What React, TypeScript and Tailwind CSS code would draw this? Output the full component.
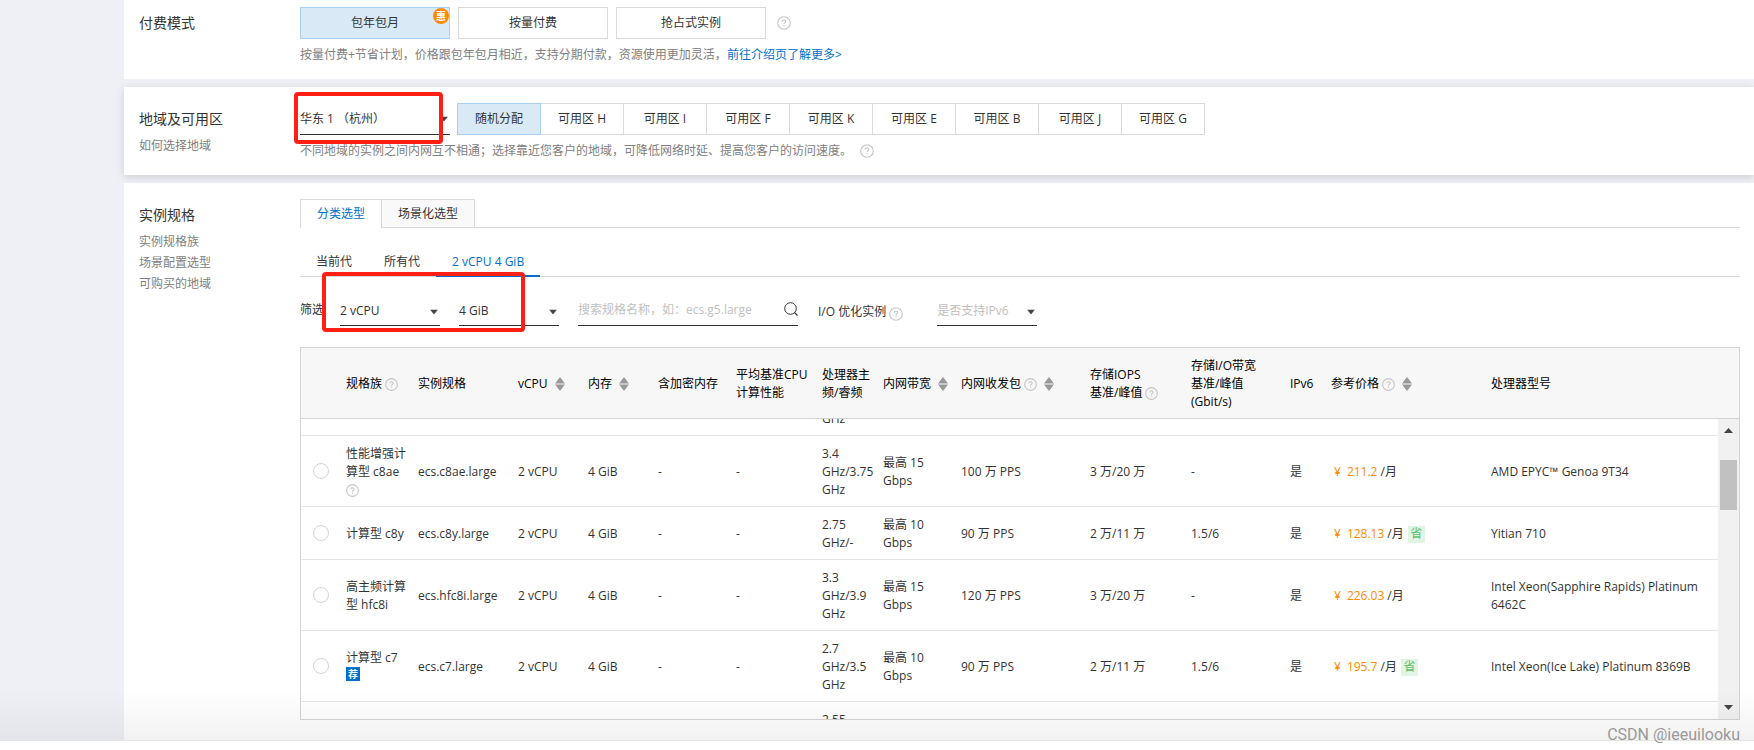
import { clsx } from "clsx"
import { useLayoutEffect, useRef, useState } from "react"
import type { ReactNode } from "react"

type Spec = {
    id: string
    family?: string
    help?: boolean
    recommended?: boolean
    name?: string
    clock: string[]
    bandwidth?: string
    pps?: string
    iops?: string
    io?: string
    price?: string
    saving?: boolean
    cpu?: string
}

// the first and last entries only peek into the scroll area
const SPECS: Spec[] = [
    { id: "prev", clock: ["", "", "GHz"] },
    { id: "c8ae", family: "性能增强计算型 c8ae", help: true, name: "ecs.c8ae.large", clock: ["3.4", "GHz/3.75", "GHz"], bandwidth: "最高 15", pps: "100 万 PPS", iops: "3 万/20 万", io: "-", price: "211.2", cpu: "AMD EPYC™ Genoa 9T34" },
    { id: "c8y", family: "计算型 c8y", name: "ecs.c8y.large", clock: ["2.75", "GHz/-"], bandwidth: "最高 10", pps: "90 万 PPS", iops: "2 万/11 万", io: "1.5/6", price: "128.13", saving: true, cpu: "Yitian 710" },
    { id: "hfc8i", family: "高主频计算型 hfc8i", name: "ecs.hfc8i.large", clock: ["3.3", "GHz/3.9", "GHz"], bandwidth: "最高 15", pps: "120 万 PPS", iops: "3 万/20 万", io: "-", price: "226.03", cpu: "Intel Xeon(Sapphire Rapids) Platinum 6462C" },
    { id: "c7", family: "计算型 c7", recommended: true, name: "ecs.c7.large", clock: ["2.7", "GHz/3.5", "GHz"], bandwidth: "最高 10", pps: "90 万 PPS", iops: "2 万/11 万", io: "1.5/6", price: "195.7", saving: true, cpu: "Intel Xeon(Ice Lake) Platinum 8369B" },
    { id: "next", clock: ["2.55", "", ""] },
]

const ZONES = ["随机分配", "可用区 H", "可用区 I", "可用区 F", "可用区 K", "可用区 E", "可用区 B", "可用区 J", "可用区 G"]

const HelpIcon = ({ className }: { className?: string }) => (
    <svg viewBox="0 0 16 16" className={clsx("shrink-0 text-[#c4c4c4]", className)} fill="none" stroke="currentColor">
        <circle cx="8" cy="8" r="7.2" strokeWidth="1.3" />
        <path d="M6 6.6c0-1.3.9-2 2-2s2 .7 2 1.8c0 1.5-2 1.5-2 3.1" strokeWidth="1.3" />
        <path d="M8 10.7v1.2" strokeWidth="1.4" />
    </svg>
)

const SortIcon = () => (
    <svg viewBox="0 0 10 14" className="ml-[7px] h-[14px] w-[10px] shrink-0 fill-[#999]">
        <path d="M5 0l5 6.400H0zM0 7.600h10L5 14z" />
    </svg>
)

const Panel = ({ title, links, className, children }: { title: string; links?: string[]; className?: string; children: ReactNode }) => (
    <section className={clsx("flex bg-white pr-[14px] pl-[15px]", className)}>
        <div className="w-[161px] shrink-0 pt-[6px]">
            <h2 className="text-[14px] leading-5 text-[#333]">{title}</h2>
            {links && (
                <ul className="mt-[6px]">
                    {links.map((link) => (
                        <li key={link} className="leading-[21px]">
                            <a href="#" className="text-[#808080]">{link}</a>
                        </li>
                    ))}
                </ul>
            )}
        </div>
        <div className="min-w-0 flex-1">{children}</div>
    </section>
)

const Dropdown = ({ label, options, className, placeholder }: { label: string; options: string[]; className?: string; placeholder?: boolean }) => (
    <div className={clsx("relative border-b border-[#333]", className)}>
        <select aria-label={label} className={clsx("h-full w-full appearance-none bg-transparent outline-0", placeholder ? "text-[#bfbfbf]" : "text-[#333]")}>
            {options.map((option) => (
                <option key={option}>{option}</option>
            ))}
        </select>
        <svg viewBox="0 0 8 5" className="pointer-events-none absolute top-1/2 right-[2px] h-[5px] w-2 -translate-y-1/2 fill-[#444]">
            <path d="M0 0h8L4 5z" />
        </svg>
    </div>
)

const Columns = () => (
    <colgroup>
        <col className="w-[37px]" />
        <col className="w-[72px]" />
        <col className="w-[100px]" />
        <col className="w-[70px]" />
        <col className="w-[70px]" />
        <col className="w-[78px]" />
        <col className="w-[86px]" />
        <col className="w-[61px]" />
        <col className="w-[78px]" />
        <col className="w-[129px]" />
        <col className="w-[101px]" />
        <col className="w-[99px]" />
        <col className="w-[41px]" />
        <col className="w-[160px]" />
        <col />
    </colgroup>
)

const Th = ({ children, help, sort }: { children?: ReactNode; help?: boolean; sort?: boolean }) => (
    <th className="pt-[2px] pl-2 text-left font-normal whitespace-nowrap">
        <div className="flex items-center">
            <span>{children}</span>
            {help && <HelpIcon className="ml-[3px] size-[13px]" />}
            {sort && <SortIcon />}
        </div>
    </th>
)

const Td = ({ children, className }: { children?: ReactNode; className?: string }) => (
    <td className={clsx("pt-[9px] pb-[7px] pl-2", className)}>{children}</td>
)

const SpecRow = ({ spec, selected, onSelect }: { spec: Spec; selected: boolean; onSelect: () => void }) => (
    <tr className="border-b border-[#e5e5e5]">
        <td className="pl-3">
            {spec.name && (
                <input
                    type="radio"
                    name="spec"
                    aria-label={spec.name}
                    checked={selected}
                    onChange={onSelect}
                    className="block size-4 appearance-none rounded-full border border-[#d4d4d4] bg-white checked:border-4 checked:border-[#0070cc]"
                />
            )}
        </td>
        <Td>
            <div className="w-[62px]">
                {spec.family}
                {spec.help && (
                    <div className="flex h-[18px] items-center">
                        <HelpIcon className="size-[13px]" />
                    </div>
                )}
                {spec.recommended && (
                    <div className="flex h-[18px] items-start">
                        <span className="flex size-[14px] items-center justify-center bg-[#0070cc] text-[10px] leading-none font-bold text-white">荐</span>
                    </div>
                )}
            </div>
        </Td>
        <Td>{spec.name}</Td>
        <Td>{spec.name && "2 vCPU"}</Td>
        <Td>{spec.name && "4 GiB"}</Td>
        <Td>{spec.name && "-"}</Td>
        <Td>{spec.name && "-"}</Td>
        <Td className="whitespace-nowrap">
            {spec.clock.map((line, i) => (
                <div key={i} className="min-h-[18px]">{line}</div>
            ))}
        </Td>
        <Td className="whitespace-nowrap">
            {spec.bandwidth && <>{spec.bandwidth}<br />Gbps</>}
        </Td>
        <Td>{spec.pps}</Td>
        <Td>{spec.iops}</Td>
        <Td>{spec.io}</Td>
        <Td>{spec.name && "是"}</Td>
        <Td>
            {spec.price && (
                <div className="flex items-center">
                    <span className="pl-[3px] text-[#ff8a00]">¥</span>
                    <span className="ml-[6px] text-[#ff8a00]">{spec.price}</span>
                    <span className="ml-[3px]">/月</span>
                    {spec.saving && <span className="-my-px ml-1 flex size-[17px] items-center justify-center bg-[#e0f5e3] text-[#5fbf71]">省</span>}
                </div>
            )}
        </Td>
        <Td className="pr-4">{spec.cpu}</Td>
    </tr>
)

const SpecTable = () => {
    const [selected, setSelected] = useState("")
    const body = useRef<HTMLDivElement>(null)

    useLayoutEffect(() => {
        if (body.current) body.current.scrollTop = 54
    }, [])

    const scrollBy = (delta: number) => body.current?.scrollBy({ top: delta })

    return (
        <div className="border border-[#d4d4d4]">
            <div className="border-b border-[#d4d4d4] bg-[#f7f7f7] pr-[21px]">
                <table className="w-full table-fixed text-black">
                    <Columns />
                    <thead>
                        <tr className="h-[70px]">
                            <Th />
                            <Th help>规格族</Th>
                            <Th>实例规格</Th>
                            <Th sort>vCPU</Th>
                            <Th sort>内存</Th>
                            <Th>含加密内存</Th>
                            <Th>平均基准CPU<br />计算性能</Th>
                            <Th>处理器主<br />频/睿频</Th>
                            <Th sort>内网带宽</Th>
                            <Th help sort>内网收发包</Th>
                            <Th>存储IOPS<br /><span className="flex items-center">基准/峰值<HelpIcon className="ml-[3px] size-[13px]" /></span></Th>
                            <Th>存储I/O带宽<br />基准/峰值<br />(Gbit/s)</Th>
                            <Th>IPv6</Th>
                            <Th help sort>参考价格</Th>
                            <Th>处理器型号</Th>
                        </tr>
                    </thead>
                </table>
            </div>
            <div className="flex h-[300px]">
                <div ref={body} className="flex-1 overflow-y-scroll [scrollbar-width:none]">
                    <table className="w-full table-fixed border-collapse text-[#333]">
                        <Columns />
                        <tbody>
                            {SPECS.map((spec) => (
                                <SpecRow key={spec.id} spec={spec} selected={selected === spec.id} onSelect={() => setSelected(spec.id)} />
                            ))}
                        </tbody>
                    </table>
                </div>
                <div className="flex w-[21px] flex-col items-center bg-[#f1f1f1]">
                    <button type="button" aria-label="向上滚动" onClick={() => scrollBy(-40)} className="flex h-[23px] w-full items-center justify-center">
                        <svg viewBox="0 0 9 5" className="h-[5px] w-[9px] fill-[#444]"><path d="M0 5h9L4.500 0z" /></svg>
                    </button>
                    <div className="w-full flex-1 px-[2px] pt-[18px]">
                        <div className="h-[50px] bg-[#c1c1c1]" />
                    </div>
                    <button type="button" aria-label="向下滚动" onClick={() => scrollBy(40)} className="flex h-[23px] w-full items-center justify-center">
                        <svg viewBox="0 0 9 5" className="h-[5px] w-[9px] fill-[#444]"><path d="M0 0h9L4.500 5z" /></svg>
                    </button>
                </div>
            </div>
        </div>
    )
}

const App = () => {
    const [zone, setZone] = useState(ZONES[0])

    return (
        <div className="relative overflow-hidden bg-white font-['Open_Sans','Noto_Sans_CJK_SC',sans-serif] text-[12px] leading-[18px] text-[#333]">
            <div className="relative border-b border-[#e5e5e5] bg-[#eff0f5] pl-[124px]">
                <Panel title="付费模式" className="pt-[7px] pb-[15px]">
                    <div className="flex items-center gap-2">
                        <button type="button" className="relative h-8 w-[150px] border border-[#a9d0f0] bg-[#d9eaf6]">
                            包年包月
                            <span className="absolute top-0 right-0 flex size-4 items-center justify-center rounded-full bg-[#ff8a00] text-[10px] leading-none font-bold text-white">惠</span>
                        </button>
                        <button type="button" className="h-8 w-[150px] border border-[#d9d9d9]">按量付费</button>
                        <button type="button" className="h-8 w-[150px] border border-[#d9d9d9]">抢占式实例</button>
                        <HelpIcon className="ml-[3px] size-[14px]" />
                    </div>
                    <p className="mt-[7px] text-[#808080]">
                        按量付费+节省计划，价格跟包年包月相近，支持分期付款，资源使用更加灵活，<a href="#" className="text-[#0070cc]">前往介绍页了解更多&gt;</a>
                    </p>
                </Panel>

                <Panel title="地域及可用区" links={["如何选择地域"]} className="relative my-2 pt-4 pb-[15px] shadow-[0_2px_8px_rgba(0,0,0,0.15)]">
                    <div className="relative flex items-start gap-[7px]">
                        <Dropdown label="地域" options={["华东 1 （杭州）"]} className="h-8 w-[150px]" />
                        <div className="flex">
                            {ZONES.map((name) => (
                                <button
                                    key={name}
                                    type="button"
                                    onClick={() => setZone(name)}
                                    className={clsx(
                                        "-mr-px h-8 w-[84px] border",
                                        zone === name ? "relative border-[#a9d0f0] bg-[#d9eaf6]" : "border-[#d9d9d9] bg-white"
                                    )}
                                >
                                    {name}
                                </button>
                            ))}
                        </div>
                        <div className="pointer-events-none absolute -top-[11px] -left-[6px] h-[52px] w-[149px] rounded-[4px] border-4 border-[#ff1f14]" />
                    </div>
                    <p className="mt-[7px] flex items-center text-[#808080]">
                        不同地域的实例之间内网互不相通；选择靠近您客户的地域，可降低网络时延、提高您客户的访问速度。
                        <HelpIcon className="ml-[8px] size-[14px]" />
                    </p>
                </Panel>

                <Panel title="实例规格" links={["实例规格族", "场景配置选型", "可购买的地域"]} className="pt-4 pb-5">
                    <div className="flex h-[29px] border-b border-[#d9d9d9]">
                        <button type="button" className="-mb-px border-x border-t border-[#d9d9d9] bg-white px-4 text-[#0070cc]">分类选型</button>
                        <button type="button" className="border-t border-r border-[#d9d9d9] bg-[#f9f9f9] px-4">场景化选型</button>
                    </div>
                    <div className="mt-4 flex h-[33px] border-b border-[#d9d9d9]">
                        <button type="button" className="px-4 pt-1">当前代</button>
                        <button type="button" className="px-4 pt-1">所有代</button>
                        <button type="button" className="-mb-px border-b-2 border-[#0070cc] px-4 pt-1 text-[#0070cc]">2 vCPU 4 GiB</button>
                    </div>
                    <div className="relative flex h-[70px] items-center">
                        <span className="w-10 pb-1">筛选</span>
                        <Dropdown label="vCPU" options={["2 vCPU"]} className="h-[27px] w-[100px] pb-[2px]" />
                        <Dropdown label="内存" options={["4 GiB"]} className="ml-[19px] h-[27px] w-[100px] pb-[2px]" />
                        <label className="ml-[19px] flex h-[27px] w-[220px] items-center border-b border-[#333] pb-1">
                            <input type="text" aria-label="搜索规格名称" placeholder="搜索规格名称，如：ecs.g5.large" className="min-w-0 flex-1 bg-transparent outline-0 placeholder:text-[#bfbfbf]" />
                            <svg viewBox="0 0 14 14" className="mb-[2px] size-[14px] fill-none stroke-[#333]">
                                <circle cx="6.500" cy="6.500" r="5.800" />
                                <path d="M10.600 10.600l2.900 2.900" strokeWidth="1.300" />
                            </svg>
                        </label>
                        <span className="ml-5">I/O 优化实例</span>
                        <HelpIcon className="mt-[3px] ml-[3px] size-[14px]" />
                        <Dropdown label="IPv6" options={["是否支持IPv6"]} placeholder className="ml-[34px] h-[27px] w-[100px] pb-[2px]" />
                        <div className="pointer-events-none absolute -top-[5px] left-[22px] h-[60px] w-[203px] rounded-[4px] border-4 border-[#ff1f14]" />
                    </div>
                    <SpecTable />
                </Panel>
                <div className="pointer-events-none absolute inset-x-0 bottom-0 h-[50px] bg-linear-to-b from-transparent to-black/5" />
            </div>
            <div className="h-[9px]" />
            <div className="absolute right-[14px] bottom-[6px] font-['Roboto',sans-serif] text-[16px] leading-[18px] text-[#999]">CSDN @ieeuilooku</div>
        </div>
    )
}

export default App
